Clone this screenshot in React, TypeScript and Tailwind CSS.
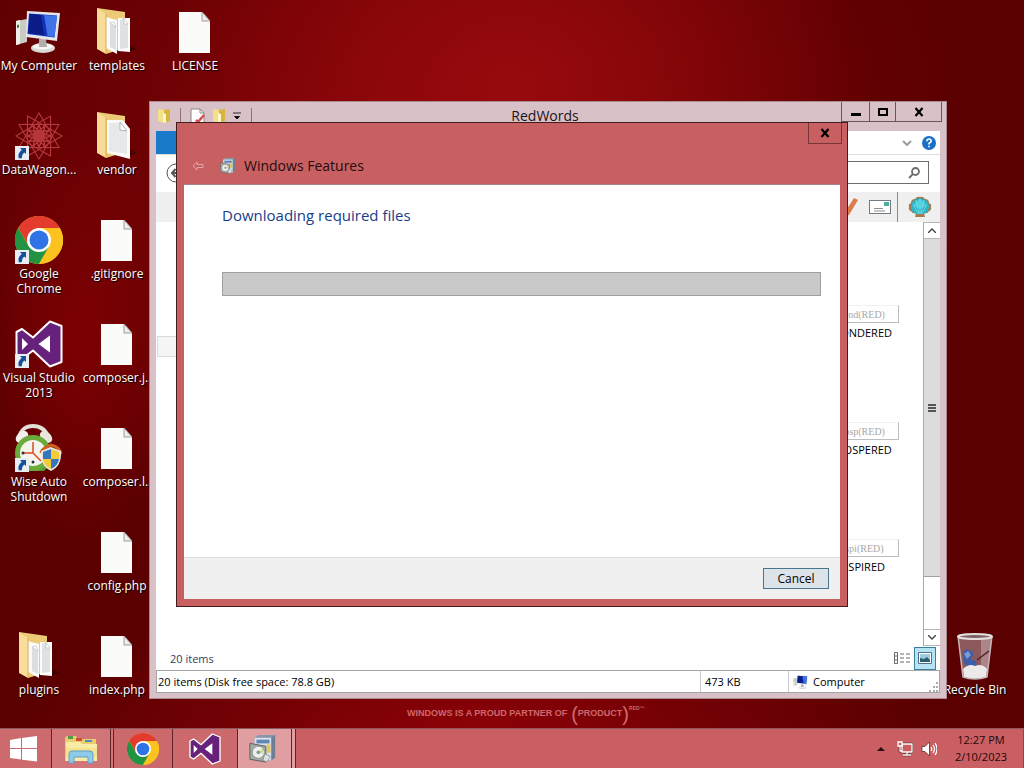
import React from "react";
import clsx from "clsx";

interface DesktopItem {
  label: string;
  icon: React.ReactNode;
  place: string;
  shortcut?: boolean;
}

const ShortcutArrow = () => (
  <svg viewBox="0 0 14 14" className="absolute bottom-0 left-0 h-3.5 w-3.5">
    <rect width="14" height="14" fill="#e9edf2" />
    <path d="M5 2h6v6L9.300 6.400C7.500 8 6.800 9.500 7 12L4 12.500C2.600 9 4 6 6.800 4z" fill="#14509c" />
  </svg>
);

const FileIcon = () => (
  <svg viewBox="0 0 48 48" className="h-12 w-12">
    <path d="M8 4h23l8 9v32H8z" fill="#fbfbfa" />
    <path d="M31 4v9h8z" fill="#eeecec" stroke="#a39c9c" strokeWidth="1" />
  </svg>
);

const FolderIcon = ({ single = false }: { single?: boolean }) => (
  <svg viewBox="0 0 48 48" className="h-12 w-12">
    <path d="M34 35l10 6-8 3z" fill="#2c0000" opacity=".6" />
    <path d="M4 0l28 4v36L13 46z" fill="#ecca76" />
    {single ? (
      <>
        <path d="M14 8h16l7 9v30L14 41z" fill="#fafaf9" />
        <path d="M16 11h11l7 9v22l-18-3z" fill="#e6e8e9" />
        <path d="M27 10v8l7 1z" fill="#fff" stroke="#b3b3b3" />
      </>
    ) : (
      <>
        <path d="M13 9l11 3v34l-11-6z" fill="#fafafa" />
        <path d="M17 15l6 3v24l-6-3z" fill="#dcdedf" />
        <path d="M17 15l4-1 2 5z" fill="#fff" stroke="#b7b9ba" strokeWidth=".6" />
        <path d="M25 10h12v34l-12-1z" fill="#fcfcfc" />
        <path d="M27 12l4-2 4 6v24l-8 1z" fill="#dfe1e2" />
        <path d="M31 10v6h4z" fill="#fff" stroke="#b7b9ba" strokeWidth=".6" />
      </>
    )}
    <path d="M4 0l9 6v40L4 41z" fill="#f8dc98" />
    <path d="M13 6v40" stroke="#d9ae55" strokeWidth="1" />
  </svg>
);

const ComputerIcon = ({ className }: { className: string }) => (
  <svg viewBox="0 0 48 48" className={className}>
    <path d="M1 13l11-2v23L1 37z" fill="#c9cbc4" />
    <path d="M1 13l4-1v24l-4 1z" fill="#f0f0e8" />
    <path d="M2 17l2-.5v3l-2 .5z" fill="#3c7a35" />
    <ellipse cx="28" cy="40" rx="12" ry="5" fill="#d9dad8" />
    <ellipse cx="28" cy="38.500" rx="10" ry="3" fill="#f6f6f4" />
    <path d="M24 31h7l1 8h-8z" fill="#aeb0ae" />
    <path d="M12 3l33 2-3 28-31-4z" fill="#e4e6ea" />
    <path d="M14 5.500l28 2-2.500 22-27-3.500z" fill="#1230b8" />
    <path d="M15 6l11 1 3 20-16-2z" fill="#0a1d87" />
    <path d="M29 7l13 1-2.500 21-7-1z" fill="#3f73e8" />
  </svg>
);

const DataWagonIcon = () => (
  <svg viewBox="0 0 48 48" className="h-12 w-12" fill="none" stroke="#b5393c" strokeWidth="1.100">
    {[0, 30, 60, 90, 120, 150, 180, 210, 240, 270, 300, 330].map((angle) => (
      <g key={angle} transform={`rotate(${angle} 24 24)`}>
        <path d="M24 1L34 18 24 30 14 18z" />
        <path d="M24 12l3 9-3 5-3-5z" />
      </g>
    ))}
  </svg>
);

const ChromeIcon = ({ className }: { className: string }) => (
  <svg viewBox="0 0 48 48" className={className}>
    <circle cx="24" cy="24" r="24" fill="#f9bd16" />
    <path d="M3.200 12A24 24 0 0 1 44.800 12L24 13 14 30z" fill="#e33b2e" />
    <path d="M3.200 12A24 24 0 0 0 24 48L34.400 30 24 35 13.600 30z" fill="#229342" />
    <path d="M24 48A24 24 0 0 0 44.800 12H24l10.400 18z" fill="#fcc31e" />
    <circle cx="24" cy="24" r="12" fill="#fff" />
    <circle cx="24" cy="24" r="9.500" fill="#2f73e6" />
  </svg>
);

const VisualStudioIcon = ({ className }: { className: string }) => (
  <svg viewBox="0 0 48 48" className={className}>
    <path
      d="M35 1.500L46.500 6v36L35 46.500 18 30.500 7 39l-5.500-3V12L7 9l11 8.500z"
      fill="#68217a"
      stroke="#fff"
      strokeWidth="2"
      strokeLinejoin="round"
    />
    <path d="M7 18v12l6-6zM35 15.500v17L23.500 24z" fill="#fff" />
  </svg>
);

const ClockIcon = () => (
  <svg viewBox="0 0 48 48" className="h-12 w-12">
    <path d="M4 15C5 5 12 2 18 2s14 3 15 13" fill="none" stroke="#e4dfd9" strokeWidth="4" />
    <ellipse cx="7" cy="13" rx="7" ry="5" transform="rotate(-40 7 13)" fill="#f4f1ec" />
    <ellipse cx="31" cy="13" rx="7" ry="5" transform="rotate(40 31 13)" fill="#e9e5df" />
    <path d="M3 42l4 5h22l5-5z" fill="#5b9730" />
    <circle cx="18" cy="29" r="18" fill="#6bab3b" />
    <circle cx="18" cy="29" r="13" fill="#f3f5ec" />
    <path d="M18 18v11l8 8M18 29H9" stroke="#dd4a25" strokeWidth="1.500" fill="none" />
    <circle cx="18" cy="38" r="1.500" fill="#263238" />
    <circle cx="8" cy="29" r="1.500" fill="#263238" />
    <path d="M26 29q0-4 10-8 9 2 10 9" fill="none" stroke="#d35a20" strokeWidth="3" />
    <path d="M26 27l10-4 10 4q1 15-10 20-11-5-10-20z" fill="#e5e7e2" />
    <path d="M28 28l8-3v10h-8z" fill="#3577bd" />
    <path d="M36 25l8 3v7h-8z" fill="#f5ca35" />
    <path d="M28 35h8v10q-7-3-8-10z" fill="#f5ca35" />
    <path d="M36 35h8q-1 7-8 10z" fill="#3577bd" />
  </svg>
);

const RecycleBinIcon = () => (
  <svg viewBox="0 0 48 48" className="h-12 w-12">
    <path d="M7 4h34l-5 41q-12 4-24 0z" fill="#96676c" opacity=".85" />
    <path d="M30 5h11l-5 40-6 1z" fill="#d5bcc0" opacity=".45" />
    <path d="M12 21q2-5 6-3 5 1 4 6l-3 3 6 2 1 6-9 2-4-7z" fill="#3a5ea8" />
    <path d="M13 22l4-3 3 4-4 4z" fill="#7d99d1" />
    <path d="M26 28l12-9" stroke="#4a2226" strokeWidth="1.500" />
    <path d="M12 37q6-6 12-3 7-3 12 3l-1 8q-11 4-22 0z" fill="#eceae9" />
    <path d="M7 4l5 41q12 4 24 0l5-41" fill="none" stroke="#c5b5b7" strokeWidth="1.500" />
    <ellipse cx="24" cy="4.500" rx="17" ry="2.500" fill="#7d6266" stroke="#e3dfdf" strokeWidth="2" />
  </svg>
);

const SmallFolder = ({ className }: { className: string }) => (
  <svg viewBox="0 0 16 16" className={className}>
    <path d="M2 1l6 1v13l-6-2z" fill="#f5e08a" />
    <path d="M8 2l6-1v12l-6 2z" fill="#d8b53c" />
    <path d="M7 5l3 1v9l-3-1z" fill="#fff7cf" />
  </svg>
);

const CheckedPage = () => (
  <svg viewBox="0 0 16 16" className="h-4 w-4">
    <path d="M2 1h9l4 4v11H2z" fill="#fff" stroke="#8b8588" />
    <path d="M11 1v4h4" fill="none" stroke="#8b8588" />
    <path d="M7 12l2 2 6-7" fill="none" stroke="#d94b4b" strokeWidth="2.500" />
  </svg>
);

const FeaturesIcon = ({ className }: { className: string }) => (
  <svg viewBox="0 0 28 30" className={className}>
    <path d="M5 3l4-3h18v24l-4 3H5z" fill="#8798ad" />
    <path d="M5 3h18v24H5z" fill="#d9e2eb" />
    <path d="M7 5h14v4H7z" fill="#5f86b5" />
    <path d="M23 3l4-3v24l-4 3z" fill="#6c7f95" />
    <path d="M18 10h4v9h-4z" fill="#e9c65b" />
    <path d="M0 9l17 3v17L0 26z" fill="#a6aaa5" stroke="#565b5c" />
    <circle cx="9" cy="18.500" r="6.500" fill="#eef0eb" stroke="#8e9794" />
    <path d="M9 18l5-4v6z" fill="#cfdd9a" />
    <circle cx="9" cy="18.500" r="2" fill="#8c9999" />
    <path d="M16 20l6 3-4 6-4-2z" fill="#dde1e2" stroke="#778085" strokeWidth=".7" />
  </svg>
);

const ExplorerIcon = () => (
  <svg viewBox="0 0 34 30" className="h-[30px] w-[34px]">
    <path d="M1 5q0-3 3-3h8l2 3h18v22H1z" fill="#e8cd6e" />
    <path d="M4 2h5v3H4z" fill="#4f9d4a" />
    <path d="M12 4h6v3h-6z" fill="#cf4e3a" />
    <path d="M21 6h7v2h-7z" fill="#4d8bc9" />
    <path d="M2 8h14l2 2h15v17H2z" fill="#f9eca6" />
    <path d="M2 14h31v9H2z" fill="#f4de83" opacity=".7" />
    <path d="M5 29V20q0-3 3-3h18q3 0 3 3v9h-5v-6H10v6z" fill="#8ecbeb" stroke="#5aa1c9" />
  </svg>
);

const WindowsLogo = () => (
  <svg viewBox="0 0 28 26" className="h-[26px] w-7" fill="#fff">
    <path d="M0 4l11-2v10H0zM12 1.900L27 0v12H12zM0 13h11v10.500L0 22zM12 13h15v12.500L12 23.700z" />
  </svg>
);

const ShellIcon = () => (
  <svg viewBox="0 0 24 22" className="h-[22px] w-6">
    <path
      d="M7 21l1-4Q4 18 3 15 0 14 1 11 0 8 3 7q0-4 4-4 2-3 5-2 3-1 5 2 4 0 4 4 3 1 2 4 1 3-2 4-1 3-5 2l1 4z"
      fill="#a37b4e"
    />
    <path d="M8 18Q3 16 3 10q1-7 9-8 8 1 9 8 0 6-5 8z" fill="#2bb3c8" />
    <path d="M12 3q-5 2-6 7l6 3 6-3q-1-5-6-7z" fill="#48cfdc" />
    <path d="M10 18L5 8M11 18L8 4M12 18V3M13 18l3-14M14 18l5-10" stroke="#8be3e6" strokeWidth=".7" />
  </svg>
);

const desktopItems: DesktopItem[] = [
  { label: "My Computer", icon: <ComputerIcon className="h-12 w-12" />, place: "col-start-1 row-start-1" },
  { label: "DataWagon...", icon: <DataWagonIcon />, place: "col-start-1 row-start-2", shortcut: true },
  { label: "Google Chrome", icon: <ChromeIcon className="h-12 w-12" />, place: "col-start-1 row-start-3", shortcut: true },
  { label: "Visual Studio 2013", icon: <VisualStudioIcon className="h-12 w-12" />, place: "col-start-1 row-start-4", shortcut: true },
  { label: "Wise Auto Shutdown", icon: <ClockIcon />, place: "col-start-1 row-start-5", shortcut: true },
  { label: "plugins", icon: <FolderIcon />, place: "col-start-1 row-start-7" },
  { label: "templates", icon: <FolderIcon />, place: "col-start-2 row-start-1" },
  { label: "vendor", icon: <FolderIcon single />, place: "col-start-2 row-start-2" },
  { label: ".gitignore", icon: <FileIcon />, place: "col-start-2 row-start-3" },
  { label: "composer.j..", icon: <FileIcon />, place: "col-start-2 row-start-4" },
  { label: "composer.l..", icon: <FileIcon />, place: "col-start-2 row-start-5" },
  { label: "config.php", icon: <FileIcon />, place: "col-start-2 row-start-6" },
  { label: "index.php", icon: <FileIcon />, place: "col-start-2 row-start-7" },
  { label: "LICENSE", icon: <FileIcon />, place: "col-start-3 row-start-1" },
  { label: "Recycle Bin", icon: <RecycleBinIcon />, place: "col-start-13 row-start-7" },
];

const DesktopIcon = ({ label, icon, place, shortcut }: DesktopItem) => (
  <button
    type="button"
    className={clsx("flex flex-col items-center pt-2 text-[12px] leading-[15px] text-white [text-shadow:1px_1px_1px_#000]", place)}
  >
    <span className="relative">
      {icon}
      {shortcut && <ShortcutArrow />}
    </span>
    <span className="mt-0.5 w-[78px]">{label}</span>
  </button>
);

const CloseGlyph = () => (
  <svg viewBox="0 0 10 10" className="h-2.5 w-2.5">
    <path d="M1.500 1l7 8M8.500 1l-7 8" stroke="#000" strokeWidth="2.200" />
  </svg>
);

const Thumbnail = ({ mark, name }: { mark: string; name: string }) => (
  <li className="flex h-[117px] shrink-0 flex-col items-center">
    <div className="flex h-[18px] w-[76px] items-center justify-center border-t border-r border-b border-t-[#f0f0f0] border-r-[#bdbdbd] border-b-[#bdbdbd] bg-white font-['Liberation_Serif',serif] text-[10px] text-[#a8a8a8]">
      {mark}
    </div>
    <span className="mt-0.5 text-[11px] leading-4 text-black">{name}</span>
  </li>
);

const ExplorerWindow = () => (
  <section className="absolute top-[101px] right-[77px] bottom-[29px] left-[149px] flex flex-col border border-[#a98b92] bg-[#d9c1c8] px-1.5 pb-[5px]">
    <header className="-mr-0.5 flex h-[29px] shrink-0 items-start">
      <div className="flex flex-1 items-center gap-1.5 pt-1.5">
        <SmallFolder className="h-4 w-4" />
        <span className="mx-0.5 h-4 w-px bg-[#8b7378]" />
        <CheckedPage />
        <SmallFolder className="h-4 w-4" />
        <svg viewBox="0 0 8 8" className="h-2 w-2">
          <path d="M0 1h8M1.500 4.500h5L4 7z" fill="#000" stroke="#000" strokeWidth=".8" />
        </svg>
        <span className="ml-1 h-4 w-px bg-[#8b7378]" />
      </div>
      <h1 className="pt-1 pr-2 text-[14px] leading-5 text-[#1d1215]">RedWords</h1>
      <div className="flex flex-1 justify-end">
        <div className="flex h-5 border-x border-b border-[#6b555a]">
          <button type="button" aria-label="Minimize" className="flex w-[27px] items-center justify-center">
            <span className="mt-1.5 h-[3px] w-2.5 bg-black" />
          </button>
          <button type="button" aria-label="Maximize" className="flex w-[27px] items-center justify-center border-x border-[#6b555a]">
            <span className="h-2 w-2.5 border-2 border-black" />
          </button>
          <button type="button" aria-label="Close" className="flex w-[45px] items-center justify-center">
            <CloseGlyph />
          </button>
        </div>
      </div>
    </header>

    <div className="flex min-h-0 flex-1 flex-col bg-white">
      <div className="flex h-6 shrink-0 items-center justify-between border-b border-[#dcdcdc] pr-1">
        <span className="h-full w-14 bg-[#1979ca]" />
        <div className="flex items-center gap-2.5">
          <svg viewBox="0 0 10 6" className="h-1.5 w-2.5">
            <path d="M1 1l4 4 4-4" fill="none" stroke="#9b9b9b" strokeWidth="2" />
          </svg>
          <svg viewBox="0 0 14 14" className="h-3.5 w-3.5">
            <circle cx="7" cy="7" r="7" fill="#1a6fc9" />
            <path d="M4.800 5.300Q5 3 7 3t2.200 2Q9.200 6.300 7 7.300V8.500" fill="none" stroke="#fff" strokeWidth="1.600" />
            <path d="M6.200 9.700h1.700v1.600H6.200z" fill="#fff" />
          </svg>
        </div>
      </div>

      <div className="flex h-[37px] shrink-0 items-center justify-between pr-[11px] pb-0.5 pl-2.5">
        <button type="button" aria-label="Back">
          <svg viewBox="0 0 20 20" className="h-5 w-5" fill="none" stroke="#555">
            <circle cx="10" cy="10" r="9" />
            <path d="M15 10H6M9.500 6L6 10l3.500 4" strokeWidth="2" />
          </svg>
        </button>
        <label className="flex h-[23px] w-[180px] items-center border border-[#6e6e6e] pr-2">
          <input aria-label="Search" className="min-w-0 flex-1 outline-none" />
          <svg viewBox="0 0 12 12" className="h-3 w-3" fill="none" stroke="#6b6b6b" strokeWidth="1.800">
            <circle cx="7.500" cy="4.500" r="3.500" />
            <path d="M5 7l-4 4" />
          </svg>
        </label>
      </div>

      <div className="flex h-[30px] shrink-0 items-center justify-end bg-[#f0f0f0] pr-2">
        <svg viewBox="0 0 18 20" className="mr-2.5 h-5 w-[18px]">
          <path d="M13 1l4 2L8 18l-5 2 1-5z" fill="#dc7c48" />
        </svg>
        <svg viewBox="0 0 22 14" className="h-3.5 w-[22px]">
          <rect x=".5" y=".5" width="21" height="13" fill="#fff" stroke="#6f7b85" />
          <rect x="15" y="2" width="5" height="4" fill="#4fae96" />
          <path d="M5 8.500h9M5 11h11" stroke="#8e8e8e" />
        </svg>
        <span className="mr-2.5 ml-1.5 h-full w-px bg-[#8c8c8c]" />
        <ShellIcon />
      </div>

      <div className="flex min-h-0 flex-1">
        <div className="w-[120px] pt-[114px] pl-px">
          <div className="h-[21px] border border-[#dadada] bg-[#f5f5f5]" />
        </div>
        <ul className="flex flex-1 flex-col items-end overflow-hidden pt-[83px] pr-6">
          <Thumbnail mark="wond(RED)" name="WONDERED" />
          <Thumbnail mark="prosp(RED)" name="PROSPERED" />
          <Thumbnail mark="inspi(RED)" name="INSPIRED" />
        </ul>
        <div className="flex w-[17px] flex-col border-l border-[#a9a9a9] bg-white">
          <button type="button" aria-label="Scroll up" className="flex h-[17px] items-center justify-center border-y border-[#b5b5b5]">
            <svg viewBox="0 0 8 5" className="h-[5px] w-2">
              <path d="M0 5l4-4 4 4" fill="none" stroke="#444" strokeWidth="1.400" />
            </svg>
          </button>
          <div className="flex flex-[338] items-center justify-center border-b border-[#a0a0a0] bg-[#dbdcdb]">
            <span className="flex w-2 flex-col gap-px">
              <span className="h-0.5 bg-[#555]" />
              <span className="h-0.5 bg-[#555]" />
              <span className="h-0.5 bg-[#555]" />
            </span>
          </div>
          <div className="flex-[52]" />
          <button type="button" aria-label="Scroll down" className="flex h-[17px] items-center justify-center border-y border-[#b5b5b5]">
            <svg viewBox="0 0 8 5" className="h-[5px] w-2">
              <path d="M0 0l4 4 4-4" fill="none" stroke="#444" strokeWidth="1.400" />
            </svg>
          </button>
        </div>
      </div>

      <div className="flex h-6 shrink-0 items-center justify-between pr-1 pl-3.5">
        <span className="pt-0.5 text-[11px] text-[#30405f]">20 items</span>
        <div className="flex items-center gap-1">
          <button type="button" aria-label="Details view">
            <svg viewBox="0 0 16 12" className="h-3 w-4" fill="none" stroke="#6a6a6a">
              <path d="M.5.5h3v11h-3zM.5 4h3M.5 8h3M6 2h4M6 6h4M6 10h4M12 2h4M12 6h4M12 10h4" />
            </svg>
          </button>
          <button type="button" aria-label="Large icons view" className="flex h-[23px] w-[22px] items-center justify-center border border-[#3a7f9b] bg-[#b5e3f4]">
            <svg viewBox="0 0 14 12" className="h-3 w-3.5">
              <path d="M.5.500h13v11H.5z" fill="#fff" stroke="#4d7183" />
              <path d="M2 2h10v8H2z" fill="#9ccbe2" />
              <path d="M2 6l4 1 3-2 3 3v2H2z" fill="#2d5d71" />
            </svg>
          </button>
        </div>
      </div>

      <footer className="flex h-[23px] shrink-0 items-center border border-[#a5a5a5] text-[11px] text-black">
        <span className="flex-1 pt-px pl-px">20 items (Disk free space: 78.8 GB)</span>
        <span className="flex h-full w-[88px] items-center border-l border-[#c9c9c9] pt-px pl-1">473 KB</span>
        <span className="flex h-full w-[151px] items-center gap-1 border-l border-[#c9c9c9] pt-px pl-1">
          <ComputerIcon className="h-4 w-4" />
          <span className="flex-1">Computer</span>
          <svg viewBox="0 0 10 10" className="h-2.5 w-2.5 self-end" fill="#ababab">
            <path d="M7 0h2v2H7zM4 4h2v2H4zM7 4h2v2H7zM0 8h2v2H0zM4 8h2v2H4zM7 8h2v2H7z" />
          </svg>
        </span>
      </footer>
    </div>
  </section>
);

const FeaturesDialog = () => (
  <section
    role="dialog"
    aria-labelledby="features-title"
    className="absolute top-[122px] right-[176px] bottom-[121px] left-[176px] flex flex-col border border-[#3f1d1f] bg-[#c86062] px-[7px] pb-[7px]"
  >
    <header className="h-[61px] shrink-0">
      <div className="-mr-0.5 flex justify-end">
        <button type="button" aria-label="Close dialog" className="flex h-[21px] w-[34px] items-center justify-center border-x border-b border-[#793638]">
          <CloseGlyph />
        </button>
      </div>
      <div className="flex h-11 items-center pl-2">
        <svg viewBox="0 0 12 10" className="h-2.5 w-3" fill="none" stroke="#e2a3a4">
          <path d="M1 5l4-4v2.500h6v3H5V9z" />
        </svg>
        <FeaturesIcon className="mr-2 ml-4 h-4 w-4" />
        <h2 id="features-title" className="text-[14px] leading-5 text-[#250c0d]">Windows Features</h2>
      </div>
    </header>
    <div className="flex-1 border-t border-[#a78585] bg-white px-[19px] pt-5 pl-[38px]">
      <p className="text-[15px] leading-5 text-[#163d8c]">Downloading required files</p>
      <div role="progressbar" aria-label="Downloading required files" className="mt-[47px] h-6 border border-[#9f9f9f] bg-[#c9c9c9]" />
    </div>
    <footer className="flex h-[42px] shrink-0 items-center justify-end border-t border-[#dedede] bg-[#f0f0f0] pr-[11px]">
      <button type="button" className="h-[21px] w-[66px] border border-[#4a7591] bg-[#dce4ea] text-[12px] leading-4 text-black">
        Cancel
      </button>
    </footer>
  </section>
);

const Taskbar = () => (
  <nav className="flex h-10 shrink-0 border-t border-[#8c5a5d] bg-[#ca5f63] text-[#1d0709]">
    <button type="button" aria-label="Start" className="flex w-[51px] items-center justify-center bg-[#cc6a6e] pr-1">
      <WindowsLogo />
    </button>
    <button type="button" aria-label="File Explorer" className="flex w-[60px] items-center justify-center border-x border-[#5e2528] bg-[#d17579]">
      <ExplorerIcon />
    </button>
    <span className="w-[3px] border-r border-[#5e2528] bg-[#d17579]" />
    <button type="button" aria-label="Google Chrome" className="flex w-[59px] items-center justify-center border-r border-[#5e2528] bg-[#cc696d]">
      <ChromeIcon className="h-8 w-8" />
    </button>
    <button type="button" aria-label="Visual Studio" className="flex w-16 items-center justify-center bg-[#cc696d]">
      <VisualStudioIcon className="h-8 w-8" />
    </button>
    <button type="button" aria-label="Windows Features" className="flex w-[55px] items-center justify-center border-x border-[#5e2528] bg-[#e09ea1] pr-1">
      <FeaturesIcon className="h-7 w-7" />
    </button>
    <span className="w-1 border-r border-[#5e2528] bg-[#e09ea1]" />
    <div className="flex flex-1 items-center justify-end">
      <svg viewBox="0 0 8 5" className="mr-3 h-[5px] w-2">
        <path d="M0 5l4-4 4 4z" fill="#2b0d0f" />
      </svg>
      <svg viewBox="0 0 16 16" className="mr-2 h-4 w-4" fill="none">
        <path d="M5 3h10v8H5zM10 11v3M6 14h8M3 5v5h2" stroke="#4a1c1f" strokeWidth="2.600" />
        <path d="M5 3h10v8H5z" fill="#ca5f63" />
        <path d="M5 3h10v8H5zM10 11v3M6 14h8M3 5v5h2" stroke="#fff" strokeWidth="1.300" />
        <path d="M1 1h4v4H1z" fill="#ca5f63" stroke="#fff" strokeWidth="1.300" />
      </svg>
      <svg viewBox="0 0 16 16" className="h-4 w-4" fill="none">
        <path d="M1 5.500h3L8.500 1v14L4 10.500H1z" fill="#fff" stroke="#4b1c1f" strokeWidth=".7" />
        <path d="M10 6q1.500 2 0 4M12 4q3 4 0 8M14 2q4 6 0 12" stroke="#fff" strokeWidth="1.200" />
      </svg>
      <div className="ml-3.5 flex w-[60px] flex-col items-center pb-0.5 text-[11px] leading-[17px]">
        <time>12:27 PM</time>
        <time>2/10/2023</time>
      </div>
      <span className="ml-2.5 h-full w-[3px] border-r border-[#8f4548]" />
    </div>
  </nav>
);

const App = () => {
  return (
    <main className="flex h-screen flex-col overflow-hidden font-['Open_Sans','Noto_Sans',sans-serif]">
      <div className="relative flex-1 bg-[#5a0001] bg-[radial-gradient(ellipse_34%_40%_at_50%_12%,#980a0e,#980a0e00),radial-gradient(ellipse_55%_60%_at_42%_18%,#800206,#80020600),radial-gradient(ellipse_10%_30%_at_8%_46%,#7c0002,#7c000200),radial-gradient(ellipse_45%_18%_at_46%_100%,#8c0208,#8c020800)]">
        <div className="grid h-full grid-cols-[repeat(13,78px)] grid-rows-7">
          {desktopItems.map((item) => (
            <DesktopIcon key={item.label} {...item} />
          ))}
        </div>
        <p className="absolute bottom-1 left-[407px] flex h-5 items-center font-['Liberation_Sans_Narrow','Liberation_Sans',sans-serif] text-[9px] font-bold whitespace-nowrap text-[#cf686a]">
          WINDOWS IS A PROUD PARTNER OF
          <span className="ml-1 text-[20px] font-normal">(</span>
          PRODUCT
          <span className="text-[20px] font-normal">)</span>
          <sup className="pb-2 text-[5px]">RED™</sup>
        </p>
        <ExplorerWindow />
        <FeaturesDialog />
      </div>
      <Taskbar />
    </main>
  );
};

export default App;
